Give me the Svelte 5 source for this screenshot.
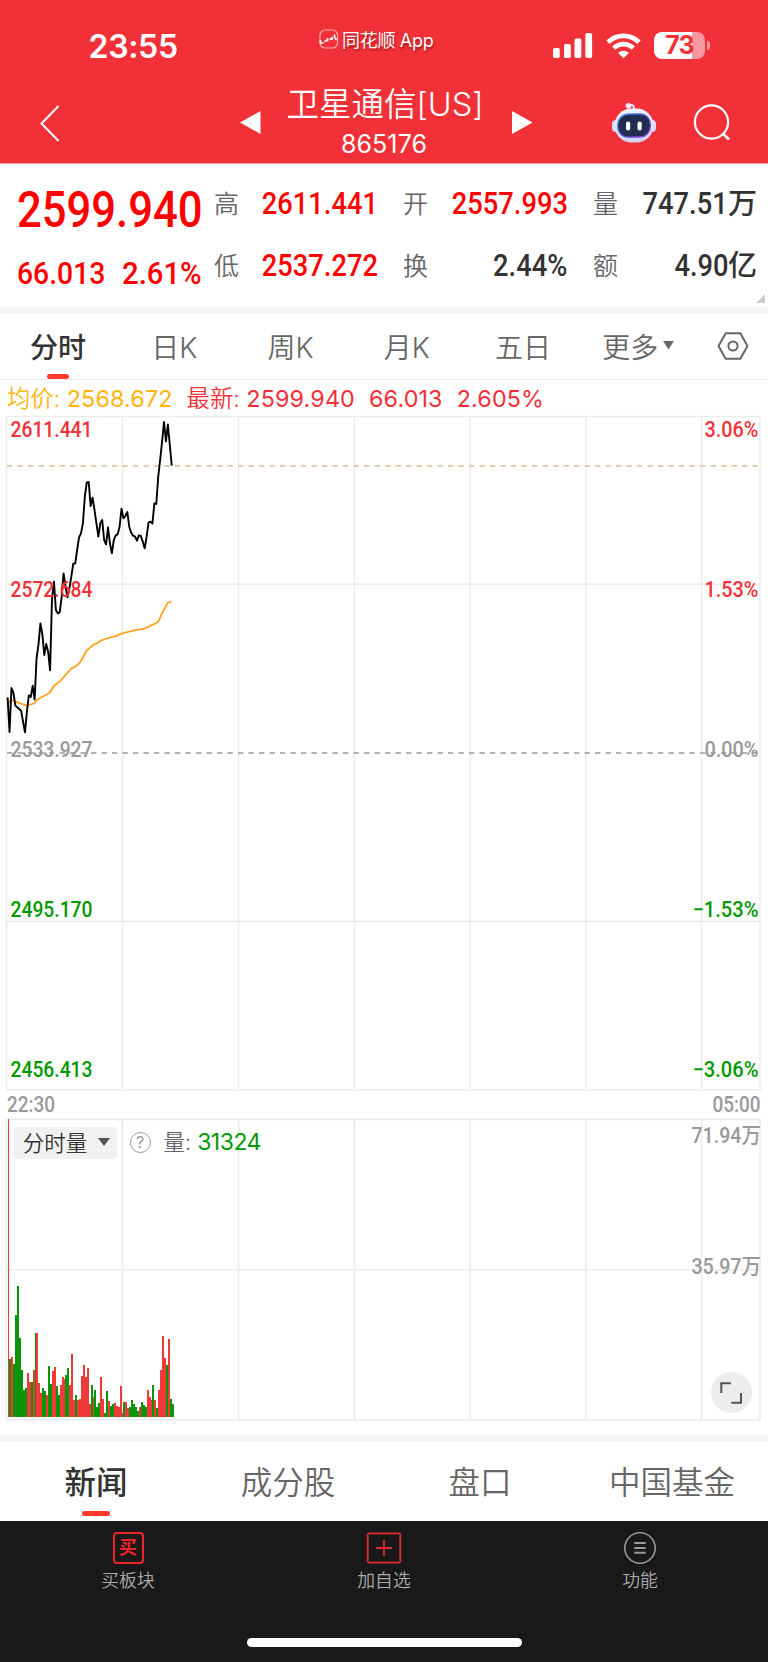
<script>
    const step = 1.933;
    const gridX = [6.5, 122.5, 238.5, 354.5, 470, 586, 701.5, 760];

    // one value per minute, in thirds of a pixel from the top of the chart
    const prix = [
        862, 966, 834, 848, 886, 892, 897, 902, 935, 967, 905, 856, 861, 827, 869, 745, 703, 640, 673, 735,
        702, 725, 781, 565, 515, 600, 610, 607, 560, 490, 530, 562, 535, 500, 461, 461, 420, 382, 370, 340,
        260, 217, 216, 288, 263, 300, 340, 380, 340, 330, 390, 403, 352, 400, 430, 390, 376, 373, 350, 296,
        325, 318, 306, 350, 368, 377, 380, 392, 376, 378, 395, 415, 380, 337, 335, 341, 280, 282, 200, 150,
        95, 36, 94, 43, 105, 167
    ];

    const moyenne = [
        [22, 866], [26, 878], [32, 872], [40, 872], [55, 878], [80, 887], [103, 880], [112, 870], [121, 863], [137, 855], [150, 847],
        [162, 827], [179, 815], [213, 776], [225, 770], [237, 761], [246, 747], [260, 722], [272, 711], [283, 703],
        [294, 699], [302, 692], [325, 684], [352, 677], [357, 673], [381, 666], [404, 661], [433, 656], [452, 647],
        [468, 640], [477, 631], [487, 608], [495, 594], [502, 579], [508, 577], [514, 575]
    ];

    // r = rise, g = fall
    const volume = ("r892 g172 r180 g157 g305 g393 g235 g140 g80 g87 r132 r104 g104 r139 g252 r250 r100 r70 g85 g77 " +
        "r65 g153 g99 r138 r150 g91 g65 r95 r120 r112 g126 g145 r95 r188 r51 g66 r51 r53 r122 r154 r120 r146 r37 g96 " +
        "r60 g81 g29 g40 r118 r52 g12 g76 r47 g33 g37 r41 r33 r28 r93 r10 g45 r44 r25 g30 g50 g38 g28 g16 r30 g43 g34 " +
        "g29 r81 r60 r51 g96 r51 g27 r80 r141 r241 r176 g155 r234 g53 g38")
        .split(" ")
        .map((v) => ({ hausse: v[0] === "r", h: Number(v.slice(1)) / 3 }));

    const lignePrix = prix.map((y, i) => `${7.6 + i * 1.931},${y / 3}`).join(" ");
    const ligneMoyenne = moyenne.map(([x, y]) => `${x / 3},${y / 3}`).join(" ");

    const axe = [
        { y: 27, val: "2611.441", pct: "3.06%", w: 54, c: "up" },
        { y: 186.7, val: "2572.684", pct: "1.53%", w: 54, c: "up" },
        { y: 346.7, val: "2533.927", pct: "0.00%", w: 54, c: "flat" },
        { y: 506.5, val: "2495.170", pct: "−1.53%", w: 66, c: "down" },
        { y: 666.5, val: "2456.413", pct: "−3.06%", w: 66, c: "down" }
    ];

    const infos = [
        ["高", "2611.441", "", "red"],
        ["开", "2557.993", "", "red"],
        ["量", "747.51", "万", "dark"],
        ["低", "2537.272", "", "red"],
        ["换", "2.44%", "", "dark"],
        ["额", "4.90", "亿", "dark"]
    ];

    const periodes = ["分时", "日K", "周K", "月K", "五日"];
    const onglets = ["新闻", "成分股", "盘口", "中国基金"];

    let periode = $state("分时");
    let onglet = $state("新闻");
</script>

<div class="page">
    <header>
        <div class="status">
            <span class="heure">23:55</span>
            <div class="app">
                <svg width="20" height="20" viewBox="0 0 20 20" fill="none">
                    <rect x="1" y="1" width="17.5" height="18" rx="5" stroke="#fff" stroke-opacity=".6" stroke-width="1.2" />
                    <path d="M1.5 11v3h3M5.5 12.5l2-1M8.5 9v3.5M10.5 10.5l2-1M13 8v3M15.5 5.5v3l2 2.5" stroke="#fff" stroke-width="1.7" />
                </svg>
                <span>同花顺 App</span>
            </div>
            <div class="systeme">
                <svg width="40" height="26" viewBox="0 0 40 26" fill="#fff">
                    <rect x="0" y="15" width="6.8" height="10" rx="1.8" />
                    <rect x="11" y="11" width="6.8" height="14" rx="1.8" />
                    <rect x="21.5" y="5.5" width="6.8" height="19.5" rx="1.8" />
                    <rect x="32.3" y="0" width="6.8" height="25" rx="1.8" />
                </svg>
                <svg width="35" height="26" viewBox="0 0 35 26" fill="none" stroke="#fff">
                    <path d="M2 9.2C10.5 .8 24.5 .8 33 9.2" stroke-width="4.8" />
                    <path d="M7.7 15.2C13.2 9.8 21.8 9.8 27.3 15.2" stroke-width="4.6" />
                    <path d="M17.5 25.2l-5.3-5.3c3-2.9 7.6-2.9 10.6 0z" fill="#fff" stroke="none" />
                </svg>
                <div class="batterie"><span>73</span></div>
            </div>
        </div>
        <nav class="titre">
            <svg class="retour" width="20" height="37" viewBox="0 0 20 37" fill="none" stroke="#fff" stroke-width="2">
                <path d="M18.5 1L1.5 18.5L18.5 36" />
            </svg>
            <svg class="prec" width="21" height="23" viewBox="0 0 21 23" fill="#fff"><path d="M0 11.5L20.5 0v23z" /></svg>
            <div class="nom">
                <h1>卫星通信<b>[US]</b></h1>
                <p>865176</p>
            </div>
            <svg class="suiv" width="21" height="23" viewBox="0 0 21 23" fill="#fff"><path d="M20.5 11.5L0 0v23z" /></svg>
            <svg class="robot" width="44" height="41" viewBox="0 0 44 41">
                <defs>
                    <linearGradient id="tete" x1="0" y1="0" x2="0" y2="1">
                        <stop offset="0" stop-color="#f4f6ff" />
                        <stop offset="1" stop-color="#cfd3f0" />
                    </linearGradient>
                    <linearGradient id="bord" x1="0" y1="0" x2="1" y2="1">
                        <stop offset="0" stop-color="#5cb4f0" />
                        <stop offset=".5" stop-color="#4c45c8" />
                        <stop offset="1" stop-color="#9a52e8" />
                    </linearGradient>
                </defs>
                <path d="M16.5 4q6-3 5.5 4" fill="none" stroke="#e4e7fa" stroke-width="2" />
                <circle cx="16.5" cy="3.7" r="2.8" fill="#e8eaff" />
                <rect x="0" y="18" width="8" height="12" rx="4" fill="#d4dbf8" />
                <rect x="36" y="18" width="8" height="12" rx="4" fill="#d4dbf8" />
                <rect x="2.5" y="6.5" width="39" height="34" rx="17" fill="url(#tete)" />
                <rect x="5.8" y="12" width="32.5" height="23" rx="10.5" fill="#222c50" stroke="url(#bord)" stroke-width="1.3" />
                <rect x="14" y="19.5" width="4.2" height="9" rx="2" fill="#fff" />
                <rect x="25.5" y="19.5" width="4.2" height="9" rx="2" fill="#fff" />
            </svg>
            <svg class="loupe" width="38" height="38" viewBox="0 0 38 38" fill="none" stroke="#fff" stroke-width="2.2">
                <circle cx="18.5" cy="18" r="16.6" />
                <path d="M29.8 29.5l6.2 6" stroke-width="2.6" />
            </svg>
        </nav>
    </header>

    <section class="cours">
        <div class="principal">
            <div class="grand"><span class="num">2599.940</span></div>
            <div class="variation">
                <span class="num">66.013</span>
                <span class="num">2.61%</span>
            </div>
        </div>
        <div class="infos">
            {#each infos as [nom, val, unite, couleur]}
                <div class="info">
                    <span class="nom-info">{nom}</span>
                    <span class="valeur {couleur}"><span class="num">{val}</span>{#if unite}<span class="unite">{unite}</span>{/if}</span>
                </div>
            {/each}
        </div>
        <i class="coin"></i>
    </section>

    <div class="bande"></div>

    <div class="periodes">
        {#each periodes as p}
            <button class:actif={periode === p} onclick={() => (periode = p)}>{p}</button>
        {/each}
        <button class="plus">更多<svg width="11" height="9" viewBox="0 0 12 10"><path d="M0 0h12L6 9.5z" fill="#666" /></svg></button>
        <button aria-label="设置">
            <svg width="32" height="28" viewBox="0 0 32 28" fill="none" stroke="#666" stroke-width="2">
                <path d="M8.7 1.2h14.6L30.5 14l-7.2 12.8H8.7L1.5 14z" stroke-linejoin="round" />
                <circle cx="16" cy="14" r="4.6" />
            </svg>
        </button>
    </div>

    <div class="legende">
        <span class="jaune">均价: <b>2568.672</b></span>
        <span>最新: <b>2599.940</b></span>
        <span><b>66.013</b></span>
        <span><b>2.605%</b></span>
    </div>

    <svg class="graphe" width="768" height="682" viewBox="0 0 768 682">
        <g stroke="#ebebeb" stroke-width="1.5">
            {#each gridX as x}
                <line x1={x} y1="6.5" x2={x} y2="680" />
            {/each}
            {#each [6.5, 174.3, 511.5, 680] as y}
                <line x1="6" y1={y} x2="761" y2={y} />
            {/each}
        </g>
        <line x1="7" y1="56" x2="761" y2="56" stroke="#e6ccaa" stroke-width="1.8" stroke-dasharray="5.3 5.2" />
        <line x1="7" y1="343" x2="761" y2="343" stroke="#999" stroke-width="1.5" stroke-dasharray="5.3 5.2" />
        <polyline points={ligneMoyenne} fill="none" stroke="#ffa21f" stroke-width="1.8" />
        <polyline points={lignePrix} fill="none" stroke="#000" stroke-width="1.9" stroke-linejoin="round" />
        {#each axe as a}
            <text class={a.c} x="10.5" y={a.y} textLength="82" lengthAdjust="spacingAndGlyphs">{a.val}</text>
            <text class={a.c} x={758.5 - a.w} y={a.y} textLength={a.w} lengthAdjust="spacingAndGlyphs">{a.pct}</text>
        {/each}
    </svg>

    <div class="temps">
        <span class="num">22:30</span>
        <span class="num">05:00</span>
    </div>

    <section class="volume">
        <svg class="graphe" width="768" height="317" viewBox="0 0 768 317">
            <g stroke="#ebebeb" stroke-width="1.5">
                {#each gridX as x}
                    <line x1={x} y1="1.5" x2={x} y2="302" />
                {/each}
                {#each [1.5, 151.7, 302] as y}
                    <line x1="6" y1={y} x2="761" y2={y} />
                {/each}
            </g>
            <g shape-rendering="crispEdges">
                {#each volume as v, i}
                    <rect x={7.5 + i * step} y={298.6 - v.h} width={step} height={v.h} fill={v.hausse ? "#f03a3a" : "#0b950b"} />
                {/each}
            </g>
            <text class="flat" x="691.5" y="25" textLength="69.5" lengthAdjust="spacingAndGlyphs">71.94万</text>
            <text class="flat" x="691.5" y="156" textLength="69.5" lengthAdjust="spacingAndGlyphs">35.97万</text>
        </svg>
        <div class="outils">
            <button class="choix">分时量<svg width="12" height="8" viewBox="0 0 12 8"><path d="M0 0h12L6 8z" fill="#555" /></svg></button>
            <span class="aide">?</span>
            <span class="qte">量: <b>31324</b></span>
        </div>
        <button class="plein" aria-label="全屏">
            <svg width="22" height="22" viewBox="0 0 22 22" fill="none" stroke="#555" stroke-width="2">
                <path d="M1.3 11V1.3H11M21 11v9.7H11.3" />
            </svg>
        </button>
    </section>

    <div class="bande"></div>

    <div class="onglets">
        {#each onglets as o}
            <button class:actif={onglet === o} onclick={() => (onglet = o)}>{o}</button>
        {/each}
    </div>

    <footer>
        <div class="actions">
            <div class="action">
                <span class="achat">买</span>
                <span>买板块</span>
            </div>
            <div class="action">
                <svg width="36" height="32" viewBox="0 0 36 32" fill="none" stroke="#e02c31" stroke-width="1.8">
                    <rect x="1.7" y="1.4" width="32.6" height="29.2" rx="1.5" />
                    <path d="M10 16h16M18 8v16" />
                </svg>
                <span>加自选</span>
            </div>
            <div class="action">
                <svg width="34" height="32" viewBox="0 0 34 32" fill="none" stroke="#999" stroke-width="1.6">
                    <circle cx="17" cy="16" r="15.2" />
                    <path d="M11.3 11h11.4M11.3 16h11.4M11.3 20.8h11.4" stroke-width="1.9" />
                </svg>
                <span>功能</span>
            </div>
        </div>
        <div class="barre"></div>
    </footer>
</div>

<style>
    :global(body) {
        margin: 0;
        background: #fff;
    }
    .page {
        width: 768px;
        height: 1662px;
        overflow: hidden;
        background: #fff;
        font-family: Inter, "Noto Sans CJK SC", sans-serif;
    }
    svg {
        display: block;
        flex: none;
    }
    button {
        border: 0;
        padding: 0;
        background: none;
        font-family: inherit;
        color: inherit;
    }
    b {
        font-weight: 400;
    }
    .num {
        font-family: Roboto, sans-serif;
        font-weight: 500;
        display: inline-block;
        transform: scaleX(0.88);
    }

    header {
        height: 164px;
        box-sizing: border-box;
        background: #f23038;
        border-bottom: 1px solid #f9a0a3;
        color: #fff;
    }
    .status {
        height: 80px;
        display: grid;
        grid-template-columns: 319px 234px 1fr;
    }
    .heure {
        padding-left: 88.5px;
        font-size: 32px;
        line-height: 93px;
        font-weight: 600;
        letter-spacing: -0.3px;
    }
    .app {
        display: flex;
        align-items: flex-start;
        gap: 3px;
        padding-top: 29px;
        font-size: 18px;
        line-height: 23px;
        letter-spacing: -0.3px;
        white-space: nowrap;
        text-shadow: 1px 2px 2px rgba(90, 0, 0, 0.5);
    }
    .systeme {
        display: flex;
        align-items: flex-start;
        padding-top: 33px;
        gap: 13px;
    }
    .batterie {
        position: relative;
        width: 51px;
        height: 27px;
        margin-top: -1px;
        border-radius: 8px;
        background: linear-gradient(to right, #fff 37.5px, #f998a0 37.5px);
        color: #f23038;
        font-size: 25px;
        line-height: 27px;
        font-weight: 700;
        text-align: center;
        letter-spacing: -0.8px;
    }
    .batterie::after {
        content: "";
        position: absolute;
        left: 52.5px;
        top: 9px;
        width: 3.5px;
        height: 9px;
        border-radius: 0 4px 4px 0;
        background: #f998a0;
    }
    .titre {
        display: flex;
        height: 83px;
        align-items: flex-start;
    }
    .retour {
        margin: 25px 0 0 40px;
    }
    .prec {
        margin: 31px 0 0 180px;
    }
    .nom {
        width: 251px;
        box-sizing: border-box;
        padding-right: 5px;
        text-align: center;
    }
    h1 {
        margin: 0 -2px 0 0;
        font-size: 32.5px;
        line-height: 49px;
        font-weight: 350;
        white-space: nowrap;
    }
    h1 b {
        font-weight: 350;
        font-size: 32.5px;
    }
    .nom p {
        margin: 0;
        font-size: 25px;
        line-height: 31px;
        letter-spacing: 0.1px;
    }
    .suiv {
        margin-top: 31px;
    }
    .robot {
        margin: 22px 0 0 79px;
    }
    .loupe {
        margin: 24px 0 0 37px;
    }

    .cours {
        display: flex;
        position: relative;
        height: 143px;
        color: #f00;
    }
    .principal {
        width: 214px;
        padding: 15px 0 0 17px;
        box-sizing: border-box;
        white-space: nowrap;
    }
    .principal .num {
        transform-origin: left;
    }
    .grand {
        font-size: 50px;
        line-height: 60px;
        height: 60px;
    }
    .grand .num {
        transform: scaleX(0.872);
    }
    .variation {
        display: grid;
        grid-template-columns: 105px 80px;
        font-size: 31.5px;
        line-height: 70px;
    }
    .variation .num {
        transform: scaleX(0.9);
    }
    .variation .num:last-child {
        transform: scaleX(0.93);
    }
    .infos {
        display: grid;
        grid-template-columns: 189px 190px 163px;
        grid-auto-rows: 62px;
        padding-top: 9px;
    }
    .info {
        display: flex;
        justify-content: space-between;
        line-height: 61px;
        padding-right: 25.5px;
        white-space: nowrap;
    }
    .info:nth-child(3n) {
        padding-right: 0;
        width: 164px;
    }
    .nom-info {
        padding-top: 1px;
        color: #666;
        font-size: 25px;
        font-weight: 350;
    }
    .valeur {
        font-size: 31px;
        line-height: 60px;
    }
    .valeur .num {
        transform-origin: right;
    }
    .unite {
        font-size: 29px;
        font-weight: 500;
    }
    .red {
        color: #f00;
    }
    .dark {
        color: #333;
    }
    .coin {
        position: absolute;
        right: 3px;
        bottom: 4px;
        border-left: 9px solid transparent;
        border-bottom: 9px solid #ccc;
    }

    .bande {
        height: 7px;
        background: #f4f4f4;
    }
    .periodes {
        display: grid;
        grid-template-columns: repeat(5, 116.25px) 117px 1fr;
        height: 66px;
        box-sizing: border-box;
        border-bottom: 1.5px solid #ebebeb;
        color: #666;
    }
    .periodes button {
        position: relative;
        display: flex;
        align-items: center;
        justify-content: center;
        padding-bottom: 2px;
        font-size: 28px;
        font-weight: 350;
    }
    .periodes .plus {
        gap: 5px;
        padding-right: 3px;
    }
    .periodes .actif,
    .onglets .actif {
        color: #333;
        font-weight: 500;
    }
    .actif::after {
        content: "";
        position: absolute;
        bottom: 0;
        left: calc(50% - 11px);
        width: 22px;
        height: 5.5px;
        border-radius: 3px;
        background: #ff3b30;
    }

    .legende {
        display: flex;
        gap: 14px;
        height: 30px;
        padding-left: 7px;
        color: #f03238;
        font-size: 23.3px;
        line-height: 37px;
        font-weight: 350;
        white-space: nowrap;
    }
    .legende b {
        font-weight: 400;
        letter-spacing: 0.15px;
    }
    .jaune {
        color: #ffb40f;
    }
    .graphe text {
        font-family: Roboto, "Noto Sans CJK SC", sans-serif;
        font-size: 21.5px;
        font-weight: 500;
    }
    .graphe .up {
        fill: #f03238;
    }
    .graphe .down {
        fill: #009900;
    }
    .graphe .flat {
        fill: #999;
    }
    .temps {
        display: flex;
        justify-content: space-between;
        height: 26px;
        padding: 0 7px;
        color: #999;
        font-size: 21.5px;
        line-height: 25px;
    }
    .temps .num {
        transform-origin: left;
    }
    .temps .num:last-child {
        transform-origin: right;
    }

    .volume {
        position: relative;
        height: 317px;
    }
    .outils {
        position: absolute;
        left: 14px;
        top: 8.5px;
        display: flex;
        align-items: center;
        height: 32px;
        color: #666;
        font-size: 21.5px;
        line-height: 30px;
        white-space: nowrap;
    }
    .choix {
        display: flex;
        align-items: center;
        justify-content: center;
        gap: 11px;
        width: 103px;
        height: 32px;
        padding: 0 0 2px 2px;
        border-radius: 4px;
        background: #f1f1f1;
        color: #333;
        font-size: 21.5px;
        font-weight: 350;
    }
    .aide {
        width: 19px;
        height: 19px;
        margin: 0 13px 0 12.5px;
        border: 1.5px solid #999;
        border-radius: 50%;
        color: #999;
        font-size: 16px;
        line-height: 19px;
        text-align: center;
    }
    .qte {
        font-weight: 350;
        margin-top: -2px;
    }
    .qte b {
        color: #009900;
        font-size: 23px;
        letter-spacing: -0.5px;
    }
    .plein {
        position: absolute;
        left: 710.5px;
        top: 254px;
        width: 41px;
        height: 41px;
        border-radius: 50%;
        background: #ededed;
        display: flex;
        align-items: center;
        justify-content: center;
    }

    .onglets {
        display: grid;
        grid-template-columns: repeat(4, 1fr);
        height: 79px;
        color: #666;
    }
    .onglets button {
        position: relative;
        padding-bottom: 4px;
        font-size: 31.5px;
        font-weight: 350;
    }
    .onglets .actif::after {
        left: 82px;
        bottom: 5px;
        width: 28px;
    }

    footer {
        height: 141px;
        background: #191919;
        color: #aaa;
    }
    .actions {
        display: grid;
        grid-template-columns: repeat(3, 1fr);
        height: 117px;
    }
    .action {
        display: flex;
        flex-direction: column;
        align-items: center;
        padding-top: 11px;
        gap: 3px;
        font-size: 17.8px;
        font-weight: 350;
        line-height: 27px;
    }
    .achat {
        width: 27px;
        height: 28px;
        border: 2px solid #f0242c;
        border-radius: 4px;
        color: #f0242c;
        font-size: 18px;
        line-height: 27px;
        font-weight: 700;
        text-align: center;
    }
    .barre {
        width: 275px;
        height: 9px;
        margin: 0 auto;
        border-radius: 5px;
        background: #fff;
    }
</style>
